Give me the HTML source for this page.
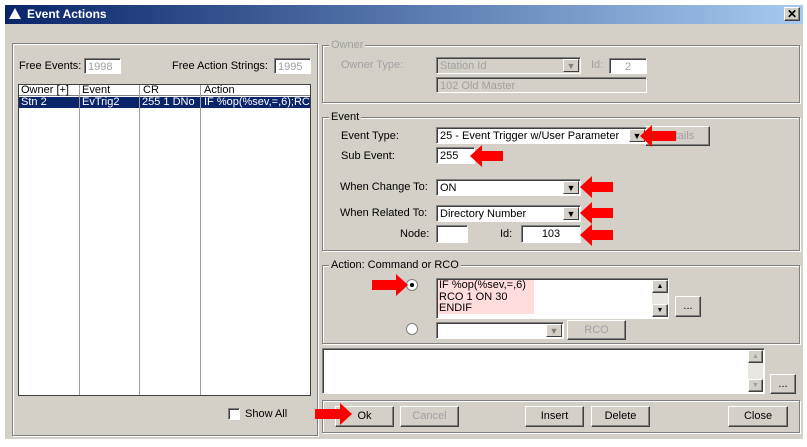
<!DOCTYPE html>
<html><head><style>
*{box-sizing:border-box;margin:0;padding:0}
body{width:807px;height:447px;background:#fff;position:relative;overflow:hidden;font-family:"Liberation Sans",sans-serif;font-size:11px;color:#000}
.a{position:absolute}
.win{left:5px;top:5px;width:798px;height:434px;background:#d4d0c8}
.title{left:5px;top:5px;width:798px;height:19px;background:linear-gradient(90deg,#0a246a,#a6caf0);color:#fff;font-weight:bold;font-size:12px;line-height:19px;padding-left:22px}
.grp{border:1px solid #808080;box-shadow:1px 1px 0 #fff, inset 1px 1px 0 #fff}
.leg{background:#d4d0c8;padding:0 2px;line-height:12px}
.box{background:#fff;border:1px solid;border-color:#808080 #fff #fff #808080;box-shadow:inset 1px 1px 0 #404040;padding:2px 3px 0;line-height:13px;white-space:nowrap;overflow:hidden}
.dis{color:#a0a0a0;background:#d4d0c8}
.btn{background:#d4d0c8;border:1px solid;border-color:#fff #404040 #404040 #fff;box-shadow:inset -1px -1px 0 #808080;text-align:center;line-height:18px}
.dd{position:absolute;right:1px;top:1px;bottom:1px;width:16px;background:#d4d0c8;border:1px solid;border-color:#fff #404040 #404040 #fff;font-size:9px;text-align:center;line-height:13px}
.g{color:#a0a0a0}
</style></head><body>
<div class="a win"></div>
<div class="a title">Event Actions</div>
<div class="a" style="left:9px;top:8px;width:0;height:0;border-left:6px solid transparent;border-right:6px solid transparent;border-bottom:11px solid #fff"></div>
<div class="a btn" style="left:784px;top:7px;width:16px;height:14px;line-height:12px;font-weight:bold;font-size:12px">✕</div>

<div class="a grp" style="left:12px;top:43px;width:306px;height:393px"></div>
<div class="a" style="left:19px;top:60px">Free Events:</div>
<div class="a box dis" style="left:84px;top:58px;width:37px;height:16px;background:#fff">1998</div>
<div class="a" style="left:172px;top:60px">Free Action Strings:</div>
<div class="a box dis" style="left:274px;top:58px;width:37px;height:16px;background:#fff">1995</div>
<div class="a" style="left:18px;top:84px;width:293px;height:312px;background:#fff;border:1px solid #404040"></div>
<div class="a" style="left:19px;top:85px;width:291px;height:11px;border-bottom:1px solid #808080;line-height:11px">
<span class="a" style="left:2px">Owner [+]</span><span class="a" style="left:63px">Event</span><span class="a" style="left:124px">CR</span><span class="a" style="left:185px">Action</span></div>
<div class="a" style="left:19px;top:97px;width:291px;height:11px;background:#0a246a;color:#fff;line-height:11px;overflow:hidden;white-space:nowrap">
<span class="a" style="left:2px">Stn 2</span><span class="a" style="left:63px">EvTrig2</span><span class="a" style="left:123px">255 1 DNo</span><span class="a" style="left:185px">IF %op(%sev,=,6);RCO</span></div>
<div class="a" style="left:79px;top:85px;width:1px;height:310px;background:#a0a0a0"></div>
<div class="a" style="left:139px;top:85px;width:1px;height:310px;background:#a0a0a0"></div>
<div class="a" style="left:200px;top:85px;width:1px;height:310px;background:#a0a0a0"></div>
<div class="a box" style="left:228px;top:408px;width:12px;height:12px;padding:0"></div>
<div class="a" style="left:245px;top:408px">Show All</div>

<div class="a grp" style="left:322px;top:45px;width:478px;height:58px"></div>
<div class="a leg g" style="left:329px;top:39px">Owner</div>
<div class="a g" style="left:341px;top:59px">Owner Type:</div>
<div class="a box dis" style="left:436px;top:57px;width:145px;height:17px">Station Id<div class="dd" style="color:#808080">▼</div></div>
<div class="a g" style="left:591px;top:59px">Id:</div>
<div class="a box dis" style="left:609px;top:58px;width:38px;height:16px;text-align:center;background:#fff">2</div>
<div class="a box dis" style="left:436px;top:77px;width:211px;height:16px">102 Old Master</div>

<div class="a grp" style="left:322px;top:117px;width:478px;height:134px"></div>
<div class="a leg" style="left:329px;top:111px">Event</div>
<div class="a" style="left:341px;top:130px">Event Type:</div>
<div class="a btn g" style="left:645px;top:126px;width:65px;height:20px">Details</div>
<div class="a box" style="left:436px;top:127px;width:211px;height:17px">25 - Event Trigger w/User Parameter<div class="dd">▼</div></div>
<div class="a" style="left:341px;top:150px">Sub Event:</div>
<div class="a box" style="left:436px;top:147px;width:39px;height:17px">255</div>
<div class="a" style="left:340px;top:181px">When Change To:</div>
<div class="a box" style="left:436px;top:179px;width:145px;height:17px">ON<div class="dd">▼</div></div>
<div class="a" style="left:340px;top:207px">When Related To:</div>
<div class="a box" style="left:436px;top:205px;width:145px;height:17px">Directory Number<div class="dd">▼</div></div>
<div class="a" style="left:400px;top:228px">Node:</div>
<div class="a box" style="left:436px;top:225px;width:32px;height:18px"></div>
<div class="a" style="left:500px;top:228px">Id:</div>
<div class="a box" style="left:521px;top:225px;width:60px;height:18px;text-align:center">103</div>

<div class="a grp" style="left:322px;top:265px;width:478px;height:79px"></div>
<div class="a leg" style="left:329px;top:259px">Action: Command or RCO</div>
<div class="a" style="left:406px;top:279px;width:12px;height:12px;border-radius:50%;background:#fff;border:1px solid #808080"><div class="a" style="left:3px;top:3px;width:4px;height:4px;background:#000;border-radius:50%"></div></div>
<div class="a box" style="left:436px;top:278px;width:233px;height:41px;padding:0"></div>
<div class="a" style="left:438px;top:280px;width:96px;height:34px;background:#fdd;line-height:11.5px;padding-left:1px">IF %op(%sev,=,6)<br>RCO 1 ON 30<br>ENDIF</div>
<div class="a" style="left:652px;top:280px;width:16px;height:37px;background:#e8e6e0"><div class="a btn" style="left:0;top:0;width:16px;height:13px;font-size:7px;line-height:11px">▲</div><div class="a btn" style="left:0;top:24px;width:16px;height:13px;font-size:7px;line-height:11px">▼</div></div>
<div class="a btn" style="left:675px;top:296px;width:26px;height:21px">...</div>
<div class="a" style="left:406px;top:323px;width:12px;height:12px;border-radius:50%;background:#fff;border:1px solid #808080"></div>
<div class="a box" style="left:436px;top:322px;width:128px;height:17px"><div class="dd" style="color:#808080">▼</div></div>
<div class="a btn g" style="left:567px;top:320px;width:59px;height:20px">RCO</div>

<div class="a box" style="left:322px;top:348px;width:443px;height:46px"></div>
<div class="a" style="left:748px;top:350px;width:15px;height:42px;background:#e8e6e0"><div class="a btn g" style="left:0;top:0;width:15px;height:13px;font-size:7px;line-height:11px">▲</div><div class="a btn g" style="left:0;top:29px;width:15px;height:13px;font-size:7px;line-height:11px">▼</div></div>
<div class="a btn" style="left:770px;top:374px;width:26px;height:20px">...</div>

<div class="a grp" style="left:322px;top:400px;width:478px;height:33px"></div>
<div class="a btn" style="left:335px;top:406px;width:59px;height:21px">Ok</div>
<div class="a btn g" style="left:400px;top:406px;width:59px;height:21px">Cancel</div>
<div class="a btn" style="left:525px;top:406px;width:59px;height:21px">Insert</div>
<div class="a btn" style="left:591px;top:406px;width:59px;height:21px">Delete</div>
<div class="a btn" style="left:728px;top:406px;width:60px;height:21px">Close</div>

<svg class="a" style="left:0;top:0" width="807" height="447">
<g fill="#f00">
<polygon points="640,136 652,125 652,131 676,131 676,141 652,141 652,147"/>
<polygon points="470,156 482,145 482,151 503,151 503,161 482,161 482,167"/>
<polygon points="580,187 592,176 592,182 613,182 613,192 592,192 592,198"/>
<polygon points="580,213 592,202 592,208 613,208 613,218 592,218 592,224"/>
<polygon points="580,235 592,224 592,230 613,230 613,240 592,240 592,246"/>
<polygon points="408,285 396,274 396,280 372,280 372,290 396,290 396,296"/>
<polygon points="352,414 340,403 340,409 315,409 315,419 340,419 340,425"/>
</g></svg>
</body></html>
